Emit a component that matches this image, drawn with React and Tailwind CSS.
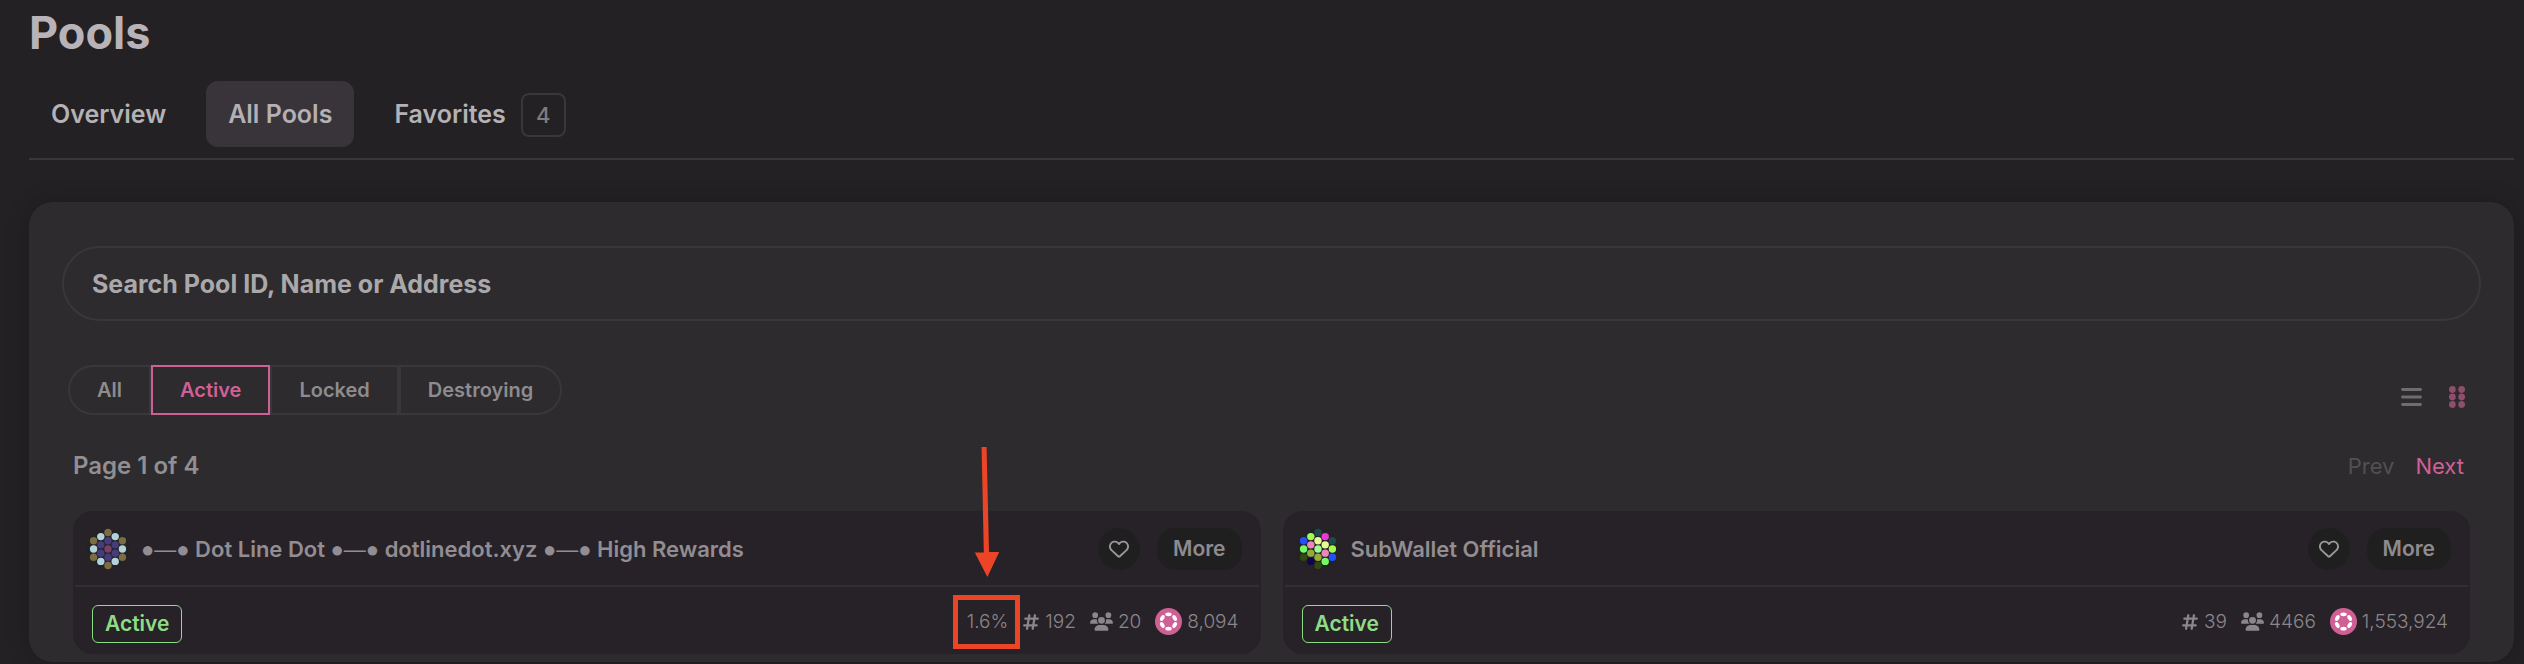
import { useState } from 'react'
import { FaHashtag, FaRegHeart, FaUsers } from 'react-icons/fa6'

const tabs = [
  { label: 'Overview' },
  { label: 'All Pools' },
  { label: 'Favorites', badge: 4 },
]

const filters = ['All', 'Active', 'Locked', 'Destroying']

const pools = [
  {
    id: 192,
    name: '●—● Dot Line Dot ●—● dotlinedot.xyz ●—● High Rewards',
    status: 'Active',
    commission: '1.6%',
    members: '20',
    bonded: '8,094',
    colors: [
      '#7c6c42', '#b3d3dc', '#b3d3dc', '#7c6c42', '#453c7c', '#7c6c42', '#453c7c', '#453c7c', '#b3d3dc', '#7a4067',
      '#b3d3dc', '#453c7c', '#453c7c', '#7c6c42', '#453c7c', '#7c6c42', '#b3d3dc', '#b3d3dc', '#7c6c42',
    ],
  },
  {
    id: 39,
    name: 'SubWallet Official',
    status: 'Active',
    members: '4466',
    bonded: '1,553,924',
    colors: [
      '#1f4a4c', '#a2fb50', '#ea38dc', '#2350fb', '#e6fb95', '#1f4a4c', '#ee86b9', '#e6fb95', '#72fb62', '#9bfb95',
      '#a2fb50', '#96ac38', '#ee86b9', '#2f4a14', '#96ac38', '#2350fb', '#12044c', '#72fb62', '#2f4a14',
    ],
  },
]

// identicon dots, top to bottom then left to right
const dots = [
  [0, -4], [-1, -3], [1, -3], [-2, -2], [0, -2], [2, -2], [-1, -1], [1, -1], [-2, 0], [0, 0],
  [2, 0], [-1, 1], [1, 1], [-2, 2], [0, 2], [2, 2], [-1, 3], [1, 3], [0, 4],
]

function Identicon({ colors }) {
  return (
    <svg viewBox="-21 -21 42 42" className="size-[42px] shrink-0" aria-hidden="true">
      <circle r="21" fill="#232224" />
      {dots.map(([x, y], i) => (
        <circle key={i} cx={x * 7.2} cy={y * 4.13} r="3.7" fill={colors[i]} />
      ))}
    </svg>
  )
}

function TokenIcon() {
  return (
    <svg viewBox="0 0 28 28" className="size-[27px] shrink-0" aria-hidden="true">
      <circle cx="14" cy="14" r="14" fill="#cf6095" />
      {[0, 60, 120, 180, 240, 300].map((a) => (
        <ellipse key={a} cx="14" cy="6.6" rx="3.3" ry="2" fill="#fff" transform={`rotate(${a} 14 14)`} />
      ))}
    </svg>
  )
}

function ListIcon() {
  return (
    <svg viewBox="0 0 21 18" className="h-[18px] w-[21px]" aria-hidden="true">
      <path d="M1.5 1.5h18M1.5 9h18M1.5 16.5h18" stroke="currentColor" strokeWidth="2.8" strokeLinecap="round" />
    </svg>
  )
}

function GridIcon() {
  return (
    <svg viewBox="0 0 16 22" className="h-[22px] w-4" fill="currentColor" aria-hidden="true">
      {[3.5, 11, 18.5].map((y) => (
        <g key={y}>
          <circle cx="3.3" cy={y} r="3.4" />
          <circle cx="12.7" cy={y} r="3.4" />
        </g>
      ))}
    </svg>
  )
}

function Annotation() {
  return (
    <span className="pointer-events-none absolute -top-[164px] -right-3 -bottom-4 -left-3.5 flex flex-col items-center">
      <svg viewBox="0 0 26 130" className="mb-[18px] h-[130px] w-[26px] shrink-0" aria-hidden="true">
        <path d="M7.6 0h5l2.4 105h10.2L13.4 130 .8 105.5h9z" fill="#ec4426" />
      </svg>
      <span className="w-full grow border-[5px] border-[#ec4426]" />
    </span>
  )
}

// the dot and dash glyphs are too wide in Inter
function PoolName({ name }) {
  return name.split(/(●—●)/).map((part, i) =>
    part === '●—●' ? (
      <span key={i} className="font-['Liberation_Sans',sans-serif] font-normal">
        {part}
      </span>
    ) : (
      part
    ),
  )
}

function PoolCard({ pool }) {
  return (
    <article className="rounded-[20px] border-2 border-[#272227] bg-[#272227]">
      <div className="flex h-[74px] items-center border-b-2 border-[#332e33] pr-[17px] pl-3">
        <Identicon colors={pool.colors} />
        <h3 className="ml-3 grow text-[22px] leading-8 font-semibold text-[#928d92]">
          <PoolName name={pool.name} />
        </h3>
        <button
          type="button"
          aria-label="Add to favorites"
          className="flex size-[42px] items-center justify-center rounded-full bg-[#201f20] text-[#9c999c]"
        >
          <FaRegHeart size={20} />
        </button>
        <button
          type="button"
          className="ml-[17px] h-[42px] rounded-[18px] bg-[#201f20] px-4 text-[21px] font-semibold text-[#8e8b8e]"
        >
          More
        </button>
      </div>
      <div className="flex h-[65px] items-center pt-1 pr-5 pl-[17px]">
        <span className="mt-1 rounded-md border border-[#8edc85] px-3 text-[21px] leading-9 font-semibold text-[#8edc85]">
          {pool.status}
        </span>
        <div className="ml-auto flex items-center gap-3.5 text-[19px] leading-[22px] font-light text-[#8b868b]">
          {pool.commission && (
            <span className="relative">
              {pool.commission}
              <Annotation />
            </span>
          )}
          <span className="flex items-center gap-[5px]">
            <FaHashtag size={18} />
            {pool.id}
          </span>
          <span className="flex items-center gap-[5px]">
            <FaUsers size={23} />
            {pool.members}
          </span>
          <span className="flex items-center gap-[5px]">
            <TokenIcon />
            {pool.bonded}
          </span>
        </div>
      </div>
    </article>
  )
}

export default function App() {
  const [tab, setTab] = useState('All Pools')
  const [filter, setFilter] = useState('Active')

  return (
    <div className="min-h-screen bg-[#232124] pr-2.5 pl-[29px] font-[Inter,sans-serif]">
      <h1 className="pt-1 text-[45px] leading-[57px] font-bold text-[#b8b3b8]">Pools</h1>

      <nav className="mt-5 flex gap-[18px] border-b-2 border-[#39373a] pb-[11px]">
        {tabs.map((t) => (
          <button
            key={t.label}
            type="button"
            onClick={() => setTab(t.label)}
            className={`flex h-[66px] items-center rounded-xl px-[22px] pt-0.5 text-[25px] font-semibold ${
              tab === t.label ? 'bg-[#39343a] text-[#b4b0b4]' : 'text-[#b4b2b4]'
            }`}
          >
            {t.label}
            {t.badge && (
              <span className="ml-[15px] flex h-11 w-[45px] items-center justify-center rounded-lg border-2 border-[#39373a] text-[22px] font-medium text-[#7e7c7e]">
                {t.badge}
              </span>
            )}
          </button>
        ))}
      </nav>

      <main className="mt-[42px] rounded-3xl bg-[#2d2b2d] px-[33px] pt-11 pb-2 shadow-[0_0_24px_rgba(0,0,0,0.2)]">
        <input
          type="search"
          aria-label="Search pools"
          placeholder="Search Pool ID, Name or Address"
          className="h-[75px] w-full rounded-full border-2 border-[#39373a] px-7 text-[25px] font-bold text-[#aaa8aa] outline-none placeholder:text-[#aaa8aa]"
        />

        <div className="mt-11 flex items-center justify-between pr-4 pl-1.5">
          <div className="flex">
            {filters.map((f) => (
              <button
                key={f}
                type="button"
                onClick={() => setFilter(f)}
                className={`h-[50px] border-2 px-[27px] text-[20px] font-semibold first:rounded-l-full last:rounded-r-full ${
                  filter === f ? 'border-[#cf6095] text-[#cf6095]' : 'border-[#39373a] text-[#8e8c8e]'
                }`}
              >
                {f}
              </button>
            ))}
          </div>
          <div className="flex items-center gap-[27px] pt-3.5">
            <button type="button" aria-label="List view" className="text-[#6f6d6f]">
              <ListIcon />
            </button>
            <button type="button" aria-label="Grid view" className="text-[#8f4e6d]">
              <GridIcon />
            </button>
          </div>
        </div>

        <div className="mt-8 flex items-center justify-between pr-[17px] pl-[11px]">
          <h4 className="pt-0.5 text-[24px] leading-[34px] font-semibold text-[#928f92]">Page 1 of 4</h4>
          <div className="flex gap-[21px] pt-0.5 text-[22px]">
            <button type="button" disabled className="text-[#525052]">
              Prev
            </button>
            <button type="button" className="text-[#cf6095]">
              Next
            </button>
          </div>
        </div>

        <div className="mt-7 grid grid-cols-2 gap-[22px] px-[11px]">
          {pools.map((p) => (
            <PoolCard key={p.id} pool={p} />
          ))}
        </div>
      </main>
    </div>
  )
}
